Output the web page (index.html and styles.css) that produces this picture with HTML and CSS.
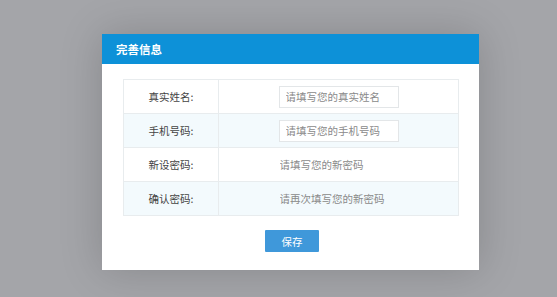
FILE: index.html
```html
<!DOCTYPE html>
<html lang="zh">
<head>
<meta charset="utf-8">
<title>完善信息</title>
<link rel="stylesheet" href="styles.css">
</head>
<body>
<div class="overlay">
  <div class="dialog">
    <div class="dialog-header">完善信息</div>
    <div class="dialog-body">
      <table class="form-table">
        <tr>
          <td class="label">真实姓名:</td>
          <td class="field"><input class="text-input" type="text" placeholder="请填写您的真实姓名"></td>
        </tr>
        <tr class="alt">
          <td class="label">手机号码:</td>
          <td class="field"><input class="text-input" type="text" placeholder="请填写您的手机号码"></td>
        </tr>
        <tr>
          <td class="label">新设密码:</td>
          <td class="field"><input class="text-input plain" type="password" placeholder="请填写您的新密码"></td>
        </tr>
        <tr class="alt">
          <td class="label">确认密码:</td>
          <td class="field"><input class="text-input plain" type="password" placeholder="请再次填写您的新密码"></td>
        </tr>
      </table>
      <div class="actions">
        <button class="save-btn" type="button">保存</button>
      </div>
    </div>
  </div>
</div>
</body>
</html>
```

FILE: styles.css
```css
* { box-sizing: border-box; }
html, body {
  margin: 0;
  height: 100%;
}
body {
  background: #a4a5a9;
  font-family: "Noto Sans CJK SC", "Noto Sans", sans-serif;
  overflow: hidden;
}
.overlay {
  padding: 34px 0 0 102px;
}
.dialog {
  width: 377px;
  height: 236px;
  background: #fff;
  box-shadow: 0 0 40px rgba(0, 0, 0, 0.18);
  display: flex;
  flex-direction: column;
}
.dialog-header {
  height: 30px;
  background: #0d91d8;
  color: #fff;
  font-size: 11.5px;
  font-weight: bold;
  line-height: 30px;
  padding-left: 14px;
}
.dialog-body {
  padding: 15px 20px 0 21px;
}
.form-table {
  width: 336px;
  border-collapse: collapse;
  font-size: 10.5px;
  color: #444;
}
.form-table td {
  border: 1px solid #e8ecee;
  height: 34px;
  padding: 0;
}
.form-table tr.alt td {
  background: #f3fafd;
}
.label {
  width: 95px;
  text-align: center;
}
.field {
  text-align: center;
}
.text-input {
  width: 120px;
  height: 22px;
  border: 1px solid #e3e6e8;
  background: #fff;
  font-family: inherit;
  font-size: 10.5px;
  padding: 0 0 0 6px;
  color: #333;
  outline: none;
  vertical-align: middle;
}
.text-input::placeholder {
  color: #8a8a8a;
}
.text-input.plain {
  border: none;
  background: transparent;
  padding-left: 1px;
}
.actions {
  display: flex;
  justify-content: center;
  padding-top: 14px;
  padding-left: 0;
}
.save-btn {
  width: 54px;
  height: 22px;
  border: none;
  border-radius: 1px;
  background: #3f98da;
  color: #fff;
  font-family: inherit;
  font-size: 10.5px;
  padding: 0;
  margin-left: 2px;
}
```
